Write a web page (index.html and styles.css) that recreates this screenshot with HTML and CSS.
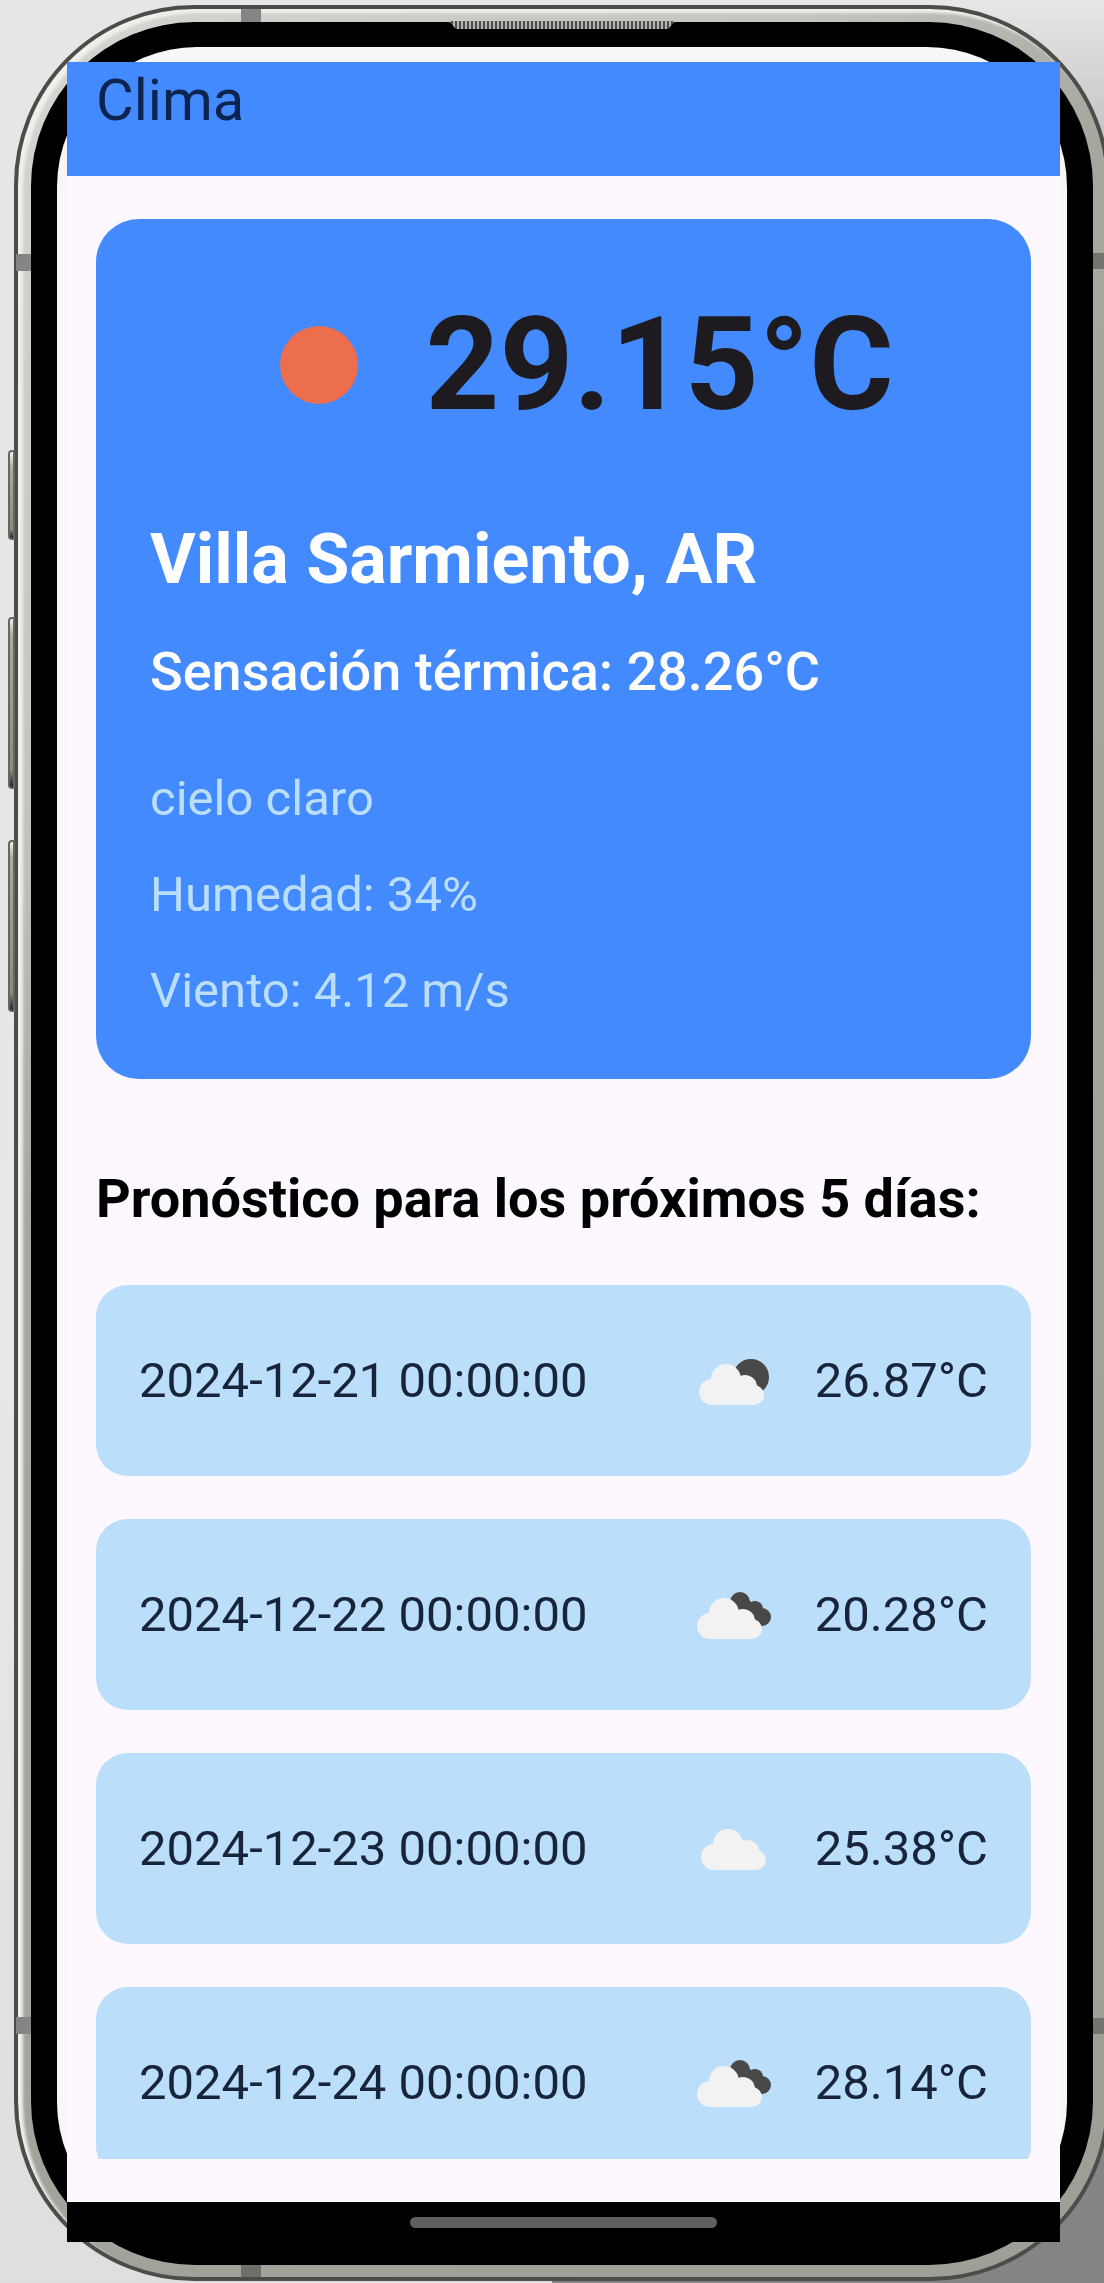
FILE: index.html
```html
<!DOCTYPE html>
<html lang="es">
<head>
<meta charset="utf-8">
<meta name="viewport" content="width=device-width, initial-scale=1">
<title>Clima</title>
<link rel="stylesheet" href="styles.css">
</head>
<body>
<svg class="defs" aria-hidden="true">
  <symbol id="cloud" viewBox="0 0 120 120">
    <g fill="#f2f2f2">
      <circle cx="37" cy="71" r="13"/>
      <circle cx="51" cy="58" r="15"/>
      <circle cx="70" cy="66" r="12"/>
      <circle cx="79" cy="74" r="10"/>
      <path d="M37 60h34l8 10v14H37z"/>
    </g>
  </symbol>
  <symbol id="broken" viewBox="0 0 120 120">
    <g fill="#484848">
      <circle cx="65" cy="47" r="10"/>
      <circle cx="80" cy="54" r="8"/>
      <circle cx="87" cy="62" r="9"/>
      <path d="M57 48l14-6 12 12v17H70z"/>
    </g>
    <use href="#cloud" x="-2" width="120" height="120"/>
  </symbol>
</svg>
<div class="phone">
  <span class="key key-small"></span>
  <span class="key key-up"></span>
  <span class="key key-down"></span>
  <span class="band band-top"></span>
  <span class="band band-bottom"></span>
  <span class="band band-left"></span>
  <span class="band band-left band-low"></span>
  <span class="band band-right"></span>
  <span class="band band-right band-low"></span>
  <div class="bezel">
    <span class="speaker"></span>
    <div class="glass">
      <div class="app">
        <header class="app-bar"><h1 class="app-title">Clima</h1></header>
        <main class="content">
          <section class="current">
            <div class="now">
              <svg class="now-icon" viewBox="0 0 172 172" aria-hidden="true"><circle cx="86" cy="86" r="39" fill="#ec6e4c"/></svg>
              <p class="now-temp">29.15°C</p>
            </div>
            <h2 class="city">Villa Sarmiento, AR</h2>
            <p class="feels">Sensación térmica: 28.26°C</p>
            <p class="detail">cielo claro</p>
            <p class="detail">Humedad: 34%</p>
            <p class="detail">Viento: 4.12 m/s</p>
          </section>
          <h2 class="forecast-title">Pronóstico para los próximos 5 días:</h2>
          <ul class="forecast">
            <li class="day">
              <span>2024-12-21 00:00:00</span>
              <svg class="day-icon" viewBox="0 0 120 120" aria-hidden="true"><circle cx="76" cy="56" r="18" fill="#484848"/><use href="#cloud"/></svg>
              <span>26.87°C</span>
            </li>
            <li class="day">
              <span>2024-12-22 00:00:00</span>
              <svg class="day-icon" viewBox="0 0 120 120" aria-hidden="true"><use href="#broken"/></svg>
              <span>20.28°C</span>
            </li>
            <li class="day">
              <span>2024-12-23 00:00:00</span>
              <svg class="day-icon" viewBox="0 0 120 120" aria-hidden="true"><use href="#cloud" x="2" y="-3" width="120" height="120"/></svg>
              <span>25.38°C</span>
            </li>
            <li class="day">
              <span>2024-12-24 00:00:00</span>
              <svg class="day-icon" viewBox="0 0 120 120" aria-hidden="true"><use href="#broken"/></svg>
              <span>28.14°C</span>
            </li>
          </ul>
        </main>
        <div class="nav"><span class="nav-handle"></span></div>
      </div>
    </div>
  </div>
</div>
</body>
</html>
```
FILE: styles.css
```css
* { box-sizing: border-box; }

body {
  display: flex;
  min-height: 100vh;
  margin: 0;
  padding: 5px 0 2px 14px;
  overflow-x: hidden;
  font-family: Roboto, "Liberation Sans", sans-serif;
  background:
    linear-gradient(to bottom, #e7e7e7 0, #c4c4c4 6%, #8a8a8a 12%, #848484 100%) right / 50% 100% no-repeat,
    linear-gradient(to bottom, #e6e6e6, #e8e8e8 60%, #dedede);
}

h1, h2, p, ul { margin: 0; padding: 0; }
.defs { position: absolute; width: 0; height: 0; }

/* Phone body */
.phone {
  position: relative;
  display: flex;
  flex: 1;
  margin-right: -6px;
  padding: 13px 13px 12px 13px;
  border: 4px solid #4c4d48;
  border-radius: 180px;
  background: linear-gradient(135deg, #d6d6d2 0, #c4c4be 24%, #a6a79f 36%, #9d9e96 100%);
  box-shadow: inset 5px 4px 3px #efefeb;
}

.bezel {
  position: relative;
  display: flex;
  flex: 1;
  padding: 25px 26px 23px 26px;
  border-radius: 164px;
  background: #000;
}

.glass {
  display: flex;
  flex: 1;
  padding: 15px 7px 0 10px;
  border-radius: 140px;
  background: #f8f6f9;
}

.key {
  position: absolute;
  left: -10px;
  width: 7px;
  border: 2px solid #66675f;
  border-radius: 4px 0 0 4px;
  background: linear-gradient(#f4f4f0 0, #aaaba3 16px, #8a8b83 90%, #222 100%);
}
.key-small { top: 441px; height: 90px; }
.key-up { top: 608px; height: 172px; }
.key-down { top: 831px; height: 172px; }

.band { position: absolute; background: #858683; }
.band-top { top: 0; left: 223px; width: 20px; height: 13px; }
.band-bottom { bottom: 0; left: 223px; width: 20px; height: 12px; background: #6e6e6a; }
.band-left { left: -2px; top: 245px; width: 15px; height: 17px; }
.band-right { right: -2px; top: 244px; width: 15px; height: 16px; background: #74746f; }
.band-low { top: auto; bottom: 243px; }

.speaker {
  position: absolute;
  top: -1px;
  left: 50%;
  width: 226px;
  height: 8px;
  margin-left: -113px;
  clip-path: polygon(0 0, 100% 0, 97% 100%, 3% 100%);
  background: repeating-linear-gradient(to right, #b4b4b0 0 2px, #4a4a48 2px 4px);
}

/* App */
.app {
  display: flex;
  flex: 1;
  flex-direction: column;
  min-width: 0;
  background: #fdf7ff;
}

.app-bar {
  height: 114px;
  padding: 4px 29px;
  background: #448aff;
}
.app-title {
  font-size: 58px;
  line-height: 68px;
  font-weight: 400;
  color: #0e2450;
}

.content {
  display: flex;
  flex: 1;
  flex-direction: column;
  padding: 43px 29px;
}

.current {
  padding: 60px 54px 40px;
  border-radius: 43px;
  background: #448aff;
  color: #fff;
}
.now {
  display: flex;
  align-items: center;
  justify-content: center;
  gap: 20px;
}
.now-icon { width: 172px; height: 172px; }
.now-temp {
  font-size: 129px;
  line-height: 172px;
  font-weight: 700;
  color: #1d1b20;
}
.city {
  margin-top: 60px;
  font-size: 70px;
  line-height: 96px;
  font-weight: 700;
}
.feels {
  margin: 25px 0 39px;
  font-size: 54px;
  line-height: 80px;
  font-weight: 500;
}
.detail {
  font-size: 49px;
  line-height: 96px;
  color: #bbdefb;
}

.forecast-title {
  margin: 80px 0 46px;
  font-size: 54px;
  line-height: 80px;
  font-weight: 700;
  color: #000;
}

.forecast {
  display: flex;
  flex: 1 1 0;
  flex-direction: column;
  gap: 43px;
  min-height: 0;
  overflow: hidden;
  list-style: none;
}
.day {
  display: flex;
  flex: none;
  align-items: center;
  height: 191px;
  padding: 0 43px;
  border-radius: 32px;
  background: #bbdefb;
  font-size: 49px;
  line-height: 64px;
  color: #17243a;
}
.day-icon {
  flex: none;
  width: 120px;
  height: 120px;
  margin: 0 20px 0 auto;
}

.nav {
  display: flex;
  justify-content: center;
  height: 40px;
  padding-top: 15px;
  background: #000;
}
.nav-handle {
  width: 307px;
  height: 11px;
  border-radius: 6px;
  background: #606060;
}
```
